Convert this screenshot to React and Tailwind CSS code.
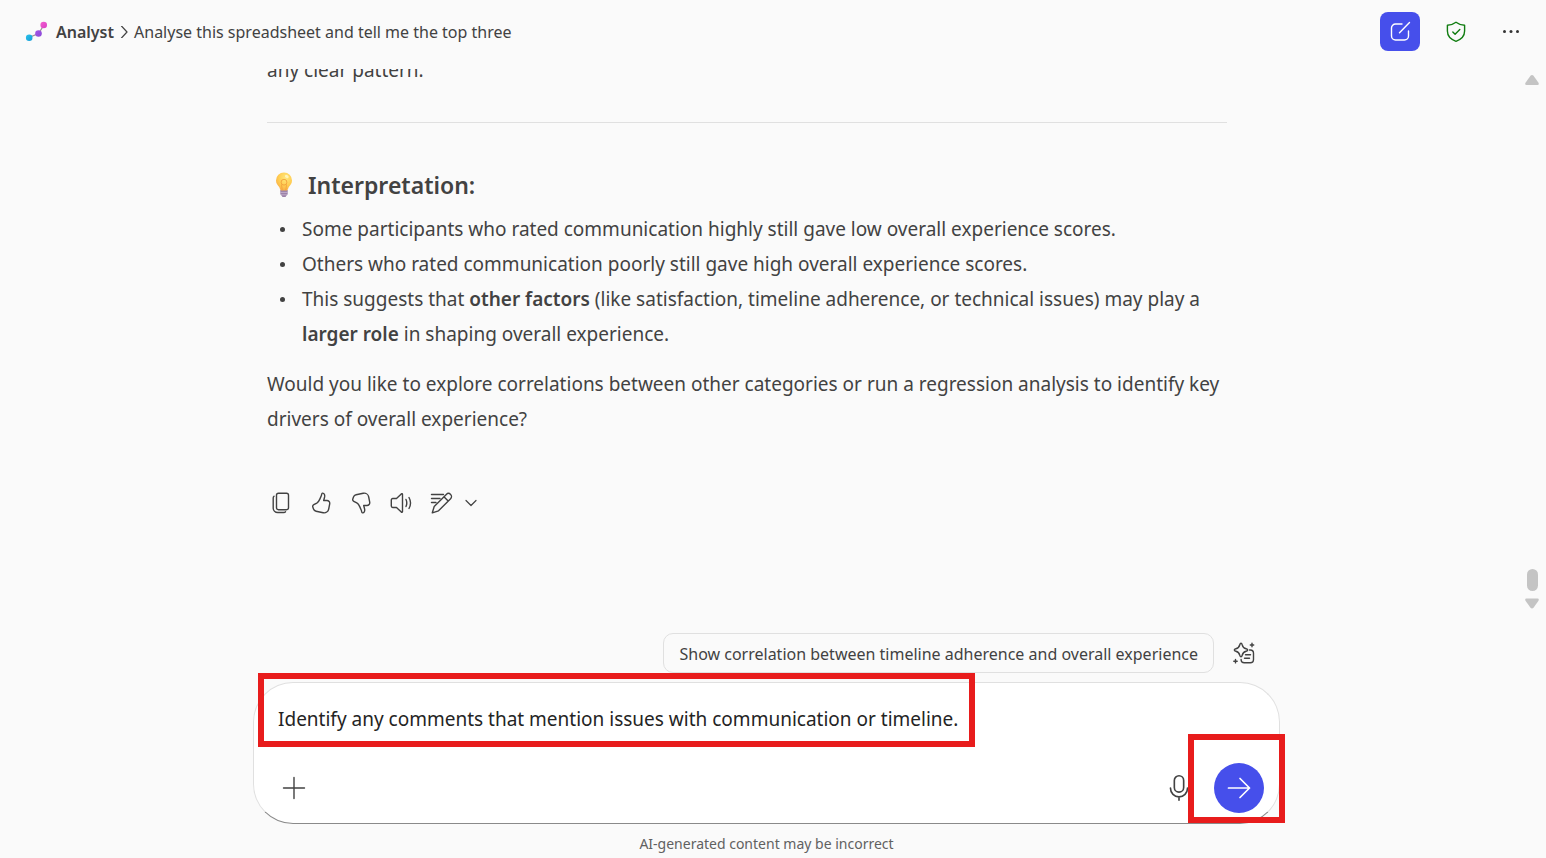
import React, { useState } from "react";

function AnalystLogo() {
  return (
    <svg className="h-6 w-6" viewBox="0 0 24 24" fill="none" aria-hidden="true">
      <defs>
        <linearGradient id="pink" x1="0" y1="0" x2="1" y2="1">
          <stop offset="0" stopColor="#f35fd0" />
          <stop offset="1" stopColor="#d93fc4" />
        </linearGradient>
        <linearGradient id="violet" x1="0" y1="0" x2="1" y2="1">
          <stop offset="0" stopColor="#a553e8" />
          <stop offset="1" stopColor="#8a4ad6" />
        </linearGradient>
        <linearGradient id="cyan" x1="0" y1="0" x2="1" y2="1">
          <stop offset="0" stopColor="#2bc3ea" />
          <stop offset="1" stopColor="#149bd7" />
        </linearGradient>
      </defs>
      <path d="M5 17.500 14.500 13.500 20 5" stroke="#9a8f96" strokeWidth="1.3" />
      <circle cx="5.200" cy="17.700" r="3.300" fill="url(#cyan)" />
      <circle cx="14.500" cy="13.500" r="3.300" fill="url(#violet)" />
      <circle cx="19.700" cy="5" r="3.300" fill="url(#pink)" />
    </svg>
  );
}

function Icon({ className, children }) {
  return (
    <svg
      className={className}
      viewBox="0 0 24 24"
      fill="none"
      stroke="currentColor"
      strokeWidth="1.4"
      strokeLinecap="round"
      strokeLinejoin="round"
      aria-hidden="true"
    >
      {children}
    </svg>
  );
}

function Bulb() {
  return (
    <svg className="h-7 w-5" viewBox="0 0 20 28" aria-hidden="true">
      <defs>
        <radialGradient id="glass" cx="0.6" cy="0.3" r="0.75">
          <stop offset="0" stopColor="#ffe77a" />
          <stop offset="0.6" stopColor="#ffcb50" />
          <stop offset="1" stopColor="#f8ab45" />
        </radialGradient>
      </defs>
      <path d="M6.3 19h7.4v4.2l-1.2 1.3-1 1.5h-3l-1-1.5-1.2-1.3z" fill="#9b82a8" />
      <path d="M6.3 21.4h7.4M6.9 23.8h6.2" stroke="#c9b5d2" strokeWidth="0.8" />
      <path d="M10 1.500a8 8 0 0 0-8 8c0 3.200 1.900 4.800 3.200 6.600.7 1 .8 2.900 1.800 3.400h6c1-.5 1.100-2.400 1.800-3.400 1.300-1.800 3.200-3.400 3.200-6.600a8 8 0 0 0-8-8z" fill="url(#glass)" />
      <path d="M8.200 19 7.500 13.500M11.800 19l.7-5.500" stroke="#f0a03c" strokeWidth="0.8" fill="none" />
      <circle cx="10" cy="11.200" r="2.900" stroke="#f0a03c" strokeWidth="0.9" fill="none" />
      <ellipse cx="12.800" cy="5.500" rx="2" ry="1.400" fill="#fff3b8" transform="rotate(30 12.800 5.500)" />
    </svg>
  );
}

function Header() {
  return (
    <header className="flex h-[69px] shrink-0 items-start justify-between pr-[23px] pl-6 pt-3">
      <nav className="flex h-10 items-center text-[16px]" aria-label="Breadcrumb">
        <AnalystLogo />
        <a href="#analyst" className="ml-2 font-semibold text-[#424242]">Analyst</a>
        <Icon className="mx-1 h-3 w-3">
          <path d="m7 0 11 12L7 24" strokeWidth="2.4" />
        </Icon>
        <span>Analyse this spreadsheet and tell me the top three</span>
      </nav>
      <div className="flex items-center">
        <button aria-label="New chat" className="flex h-[39px] w-10 items-center justify-center rounded-lg bg-[#464feb] text-white">
          <Icon className="h-6 w-6">
            <path d="M14 4H7.500A4 4 0 0 0 3.500 8v8a4 4 0 0 0 4 4h9a4 4 0 0 0 4-4v-5M11.500 12.700 21.500 2.500" />
          </Icon>
        </button>
        <button aria-label="Protected" className="ml-6 text-[#107c10]">
          <Icon className="h-6 w-6">
            <path d="M12 2.300c2.500 1.900 5.200 2.900 8.600 3v5.800c0 5-3.100 8.300-8.600 10.200-5.500-1.900-8.600-5.200-8.600-10.200V5.300c3.400-.1 6.100-1.100 8.600-3z" />
            <path d="m8.800 11.900 2.300 2.300 4.700-4.800" />
          </Icon>
        </button>
        <button aria-label="More options" className="ml-[31px] text-[#333]">
          <svg className="h-6 w-6" viewBox="0 0 24 24" fill="currentColor" aria-hidden="true">
            <circle cx="5.500" cy="11.500" r="1.500" />
            <circle cx="12" cy="11.500" r="1.500" />
            <circle cx="18.500" cy="11.500" r="1.500" />
          </svg>
        </button>
      </div>
    </header>
  );
}

function ResponseActions() {
  const button = "flex h-8 w-10 items-center justify-center";
  return (
    <div className="-ml-[6px] mt-[50px] flex">
      <button aria-label="Copy" className={button}>
        <Icon className="h-6 w-6">
          <rect x="7.500" y="2.200" width="12" height="16.500" rx="2" />
          <path d="M5 5.200c-.6.500-.8 1-.8 1.800v10a4.500 4.500 0 0 0 4.500 4.500h6c.8 0 1.400-.3 1.800-.8" />
        </Icon>
      </button>
      <button aria-label="Like" className={button}>
        <Icon className="h-6 w-6">
          <path d="M13.400 2.100c1.900-.2 2.600 2 2.200 3.900l-.9 3.500h3.200c1.900 0 3.100 1.500 2.800 3.300l-1 5.200c-.5 2.600-2.900 4.200-5.500 3.700l-7.100-1.500c-1.300-.3-2.200-1-2.600-2.200l-.7-2c-.3-.9.100-1.800 1-2.300l3-1.600c1.400-.8 2.200-2.100 2.900-3.700l1.600-3.700c.4-.9.300-2.500 1.100-2.600z" />
        </Icon>
      </button>
      <button aria-label="Dislike" className={button}>
        <Icon className="h-6 w-6">
          <path d="M13.400 21.900c1.900.2 2.600-2 2.200-3.900l-.9-3.500h3.200c1.900 0 3.100-1.500 2.800-3.300l-1-5.200c-.5-2.600-2.900-4.200-5.500-3.700L7.100 3.800c-1.300.3-2.200 1-2.600 2.200l-.7 2c-.3.900.1 1.800 1 2.300l3 1.600c1.400.8 2.200 2.100 2.900 3.700l1.600 3.700c.4.900.3 2.500 1.100 2.600z" />
        </Icon>
      </button>
      <button aria-label="Read aloud" className={button}>
        <Icon className="h-6 w-6">
          <path d="M13.500 3.500v17c0 .8-.7 1-1.200.6L7.500 16.500H3.700c-.8 0-1.400-.6-1.400-1.400V8.900c0-.8.6-1.400 1.400-1.400h3.800l4.800-4.600c.5-.4 1.200-.2 1.200.6zM17 8.500c1 2.200 1 4.800 0 7M20 6.500c1.900 3.400 1.900 7.600 0 11" />
        </Icon>
      </button>
      <button aria-label="Edit in pages" className={button}>
        <Icon className="h-6 w-6">
          <path d="M2.500 3.500h12M2.500 7.500h8.500M2.500 11.500H7" />
          <path d="M17.300 3.400a3 3 0 0 1 4.300 4.300L9.500 19.800l-6.200 2 1.900-6.300zM14.900 5.800l4.300 4.300" />
        </Icon>
      </button>
      <button aria-label="More actions" className="flex h-8 w-5 items-center justify-center">
        <Icon className="h-3 w-3">
          <path d="m2 7 10 10L22 7" strokeWidth="2.400" />
        </Icon>
      </button>
    </div>
  );
}

function Response() {
  return (
    <article className="w-full max-w-[1027px] pr-[53px] pl-[14px] text-[19px] leading-[35px] text-[#424242]">
      <p>any clear pattern.</p>
      <hr className="mt-[34px] border-[#e0e0e0]" />
      <h3 className="mt-[44px] flex h-9 items-center pl-[7px] text-[23px] font-semibold">
        <Bulb />
        <span className="ml-[14px]">Interpretation:</span>
      </h3>
      <ul className="mt-[9px] list-none">
        {[
          <>Some participants who rated communication highly still gave low overall experience scores.</>,
          <>Others who rated communication poorly still gave high overall experience scores.</>,
          <>
            This suggests that <b className="font-semibold">other factors</b> (like satisfaction, timeline adherence, or technical issues) may play a{" "}
            <b className="font-semibold">larger role</b> in shaping overall experience.
          </>,
        ].map((item, i) => (
          <li key={i} className="flex">
            <span className="flex h-[35px] w-[35px] shrink-0 items-center pl-[13px]">
              <span className="h-[5px] w-[5px] rounded-full bg-[#424242]" />
            </span>
            <span>{item}</span>
          </li>
        ))}
      </ul>
      <p className="mt-[15px]">
        Would you like to explore correlations between other categories or run a regression analysis to identify key drivers of overall experience?
      </p>
      <ResponseActions />
    </article>
  );
}

function ScrollRail() {
  return (
    <div className="flex w-7 shrink-0 flex-col items-center pt-[5px] pb-1 text-[#c4c4c4]" aria-hidden="true">
      <svg className="h-3 w-[14px]" viewBox="0 0 14 12" fill="currentColor">
        <path d="M5.500 1.800q1.500-1.600 3 0l5 7q.9 2-1 2.200h-11q-1.900-.2-1-2.200z" />
      </svg>
      <div className="mt-auto h-[22px] w-[11px] rounded-full bg-[#c4c4c4]" />
      <svg className="mt-[6px] h-3 w-[14px]" viewBox="0 0 14 12" fill="currentColor">
        <path d="M5.500 10.700q1.500 1.600 3 0l5-7q.9-2-1-2.200h-11q-1.900.2-1 2.200z" />
      </svg>
    </div>
  );
}

function Suggestions() {
  return (
    <div className="flex items-center justify-end pr-6">
      <button className="h-10 rounded-[10px] border border-[#e0e0e0] px-[15px] pt-[2px] text-[16px]">
        Show correlation between timeline adherence and overall experience
      </button>
      <button aria-label="View prompts" className="ml-[18px]">
        <Icon className="h-6 w-6">
          <path d="M9 2.200c.8 0 1 .8 1.200 1.600.6 2.300 1.600 3.400 3.900 4 .8.200 1.600.5 1.600 1.300s-.8 1-1.600 1.200c-2.300.6-3.300 1.700-3.900 4-.2.800-.4 1.600-1.200 1.600s-1-.8-1.200-1.600c-.6-2.300-1.600-3.400-3.900-4-.8-.2-1.600-.4-1.600-1.200s.8-1.100 1.600-1.300c2.300-.6 3.300-1.700 3.900-4C8 3 8.200 2.200 9 2.200z" />
          <path d="M17.500 9h.8a3.200 3.200 0 0 1 3.200 3.200v6.300a3.200 3.200 0 0 1-3.200 3.200h-6a3.200 3.200 0 0 1-3.200-3.200M13.500 13.700h5M12.500 17.200h5" />
          <path d="M20 2.300v3.400M18.300 4h3.400M3.500 18.500v3.400M1.800 20.200h3.400" />
        </Icon>
      </button>
    </div>
  );
}

function Composer() {
  const [value, setValue] = useState("Identify any comments that mention issues with communication or timeline.");
  return (
    <form
      className="relative mt-[9px] flex h-[142px] flex-col justify-between rounded-[40px] border border-[#e0e0e0] border-b-[#8a8a8a] bg-white pt-[18px] pr-[15px] pb-[10px] pl-6"
      onSubmit={(e) => e.preventDefault()}
    >
      <input
        aria-label="Message"
        value={value}
        onChange={(e) => setValue(e.target.value)}
        className="h-9 w-full bg-transparent text-[19px] text-[#242424] outline-none"
      />
      <div className="flex items-center">
        <button type="button" aria-label="Add content" className="flex h-8 w-8 items-center justify-center">
          <Icon className="h-6 w-6">
            <path d="M12 1.500v21M1.500 12h21" />
          </Icon>
        </button>
        <button type="button" aria-label="Dictate" className="ml-auto flex h-8 w-8 items-center justify-center">
          <Icon className="h-7 w-7">
            <rect x="8" y="1.500" width="8" height="14" rx="4" />
            <path d="M4.700 12v.3a7.300 7.300 0 0 0 14.600 0V12M12 19.600v2.900" />
          </Icon>
        </button>
        <button type="submit" aria-label="Send" className="ml-[19px] flex h-[50px] w-[50px] items-center justify-center rounded-full bg-[#464feb] text-white">
          <Icon className="h-6 w-6">
            <path d="M1.500 12h21M13 2.500l9.500 9.500-9.500 9.500" strokeWidth="1.700" />
          </Icon>
        </button>
      </div>
      <div className="pointer-events-none absolute -top-[10px] left-1 h-[74px] w-[717px] border-6 border-[#e81c1c]" />
      <div className="pointer-events-none absolute top-[51px] -right-[6px] h-[89px] w-[97px] border-6 border-[#e81c1c]" />
    </form>
  );
}

export default function App() {
  return (
    <div className="flex h-screen flex-col bg-[#fafafa] font-['Noto_Sans','Open_Sans',sans-serif] text-[#424242]">
      <Header />
      <main className="flex min-h-0 flex-1 flex-col">
        <section className="flex min-h-0 flex-1">
          <div className="flex flex-1 flex-col items-center justify-end overflow-hidden pr-[13px] pb-[94px] pl-7">
            <Response />
          </div>
          <ScrollRail />
        </section>
        <div className="pt-[20px] pr-[41px] pl-7">
          <div className="mx-auto max-w-[1027px]">
            <Suggestions />
            <Composer />
          </div>
        </div>
      </main>
      <footer className="flex h-[34px] items-center justify-center pt-[5px] pr-[41px] pl-7 text-[14px] text-[#616161]">
        AI-generated content may be incorrect
      </footer>
    </div>
  );
}
